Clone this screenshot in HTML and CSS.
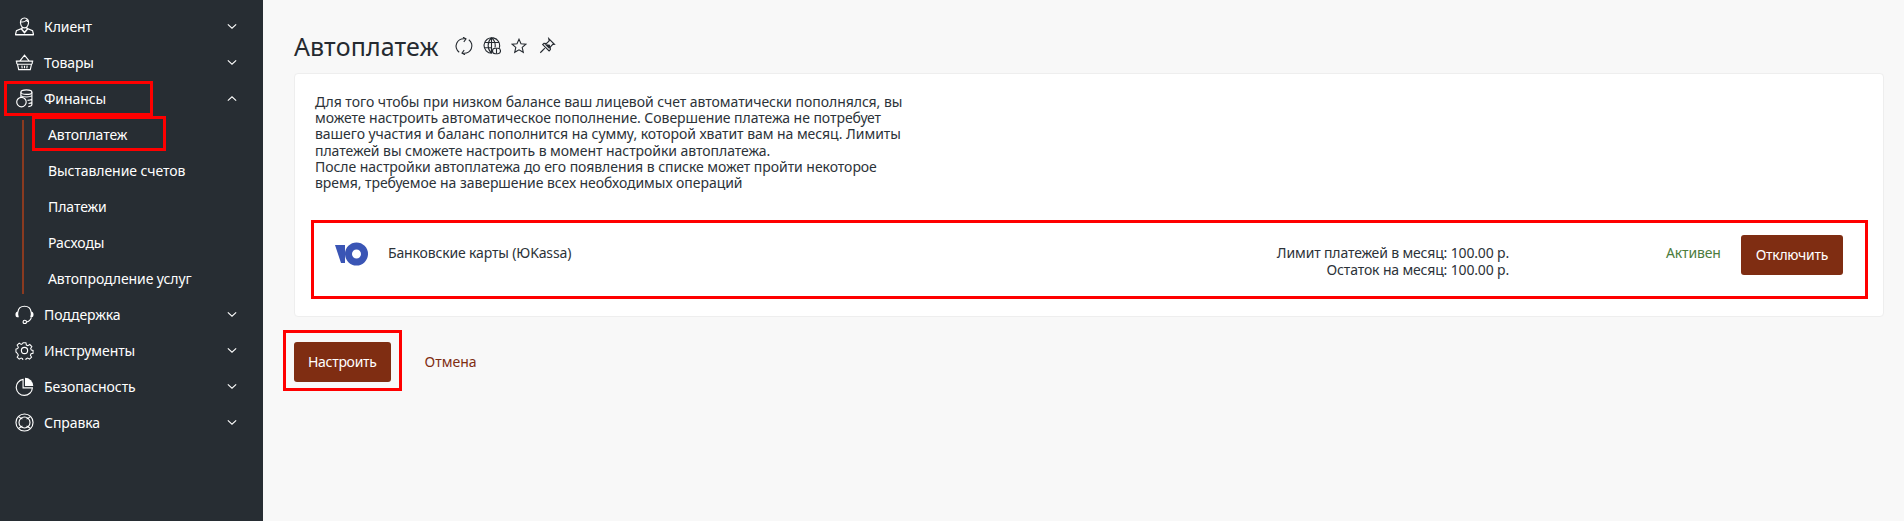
FILE: index.html
```html
<!DOCTYPE html>
<html>
<head>
<meta charset="utf-8">
<title>Автоплатеж</title>
<link rel="stylesheet" href="styles.css">
</head>
<body>
<div class="layout">
    <aside class="sidebar">
        <a class="nav-item">
            <svg class="nav-icon" viewBox="0 0 20 20"><path d="M5.800 6.500C5.400 3.200 7.400 1 10 1s4.600 2.200 4.200 5.500c-.3 2.700-2.200 5-4.200 5s-3.900-2.300-4.200-5zM5.900 5c2.300.6 5-.3 6-1.600.6.900 1.400 1.400 2.200 1.500M7.500 10.500v1.500L1.500 14.500.5 18.500h19l-1-4-6-2.500v-1.500M.5 19h19"/><path class="solid" d="M7.500 12.300l2.500 2.700 2.500-2.700 1.500.7-4 4.500-4-4.500z"/></svg>
            <span class="nav-label">Клиент</span>
            <svg class="chevron" viewBox="0 0 12 8"><path d="M1 1.500l5 4.500 5-4.500"/></svg>
        </a>
        <a class="nav-item">
            <svg class="nav-icon" viewBox="0 0 20 20"><path d="M.8 8.500h18.400M1.800 8.500v2c0 .7.300 1.100.8 1.300l1.300 5.700h12.200l1.300-5.700c.5-.2.800-.6.800-1.300v-2M2.600 11.800h14.800M5 8.500L10 2.300l5 6.200M7.200 13.300l.4 2.800M10 13.300v2.800M12.800 13.300l-.4 2.800"/></svg>
            <span class="nav-label">Товары</span>
            <svg class="chevron" viewBox="0 0 12 8"><path d="M1 1.500l5 4.500 5-4.500"/></svg>
        </a>
        <a class="nav-item">
            <svg class="nav-icon" viewBox="0 0 20 20"><ellipse cx="12" cy="3.300" rx="5.800" ry="2.400"/><path d="M6.200 3.300v5.200M17.800 3.300v13c0 1.100-1.600 1.900-3.800 2.200M6.200 7c1 .9 3.300 1.400 5.800 1.400s4.800-.5 5.800-1.400M13.200 11.900c2.200 0 3.800-.5 4.600-1.300M14.200 15.300c1.700-.1 3-.5 3.600-1.100"/><circle cx="6.800" cy="13.800" r="5"/></svg>
            <span class="nav-label">Финансы</span>
            <svg class="chevron" viewBox="0 0 12 8"><path d="M1 6.500l5-4.500 5 4.500"/></svg>
            <span class="mark mark-finance"></span>
        </a>
        <div class="subnav">
            <a class="sub-item">Автоплатеж<span class="mark mark-autopay"></span></a>
            <a class="sub-item">Выставление счетов</a>
            <a class="sub-item">Платежи</a>
            <a class="sub-item">Расходы</a>
            <a class="sub-item">Автопродление услуг</a>
        </div>
        <a class="nav-item">
            <svg class="nav-icon" viewBox="0 0 20 20"><path d="M3 7.500C3.500 3.700 6.400 1.300 10 1.300s6.500 2.400 7 6.200M17.300 13c-.7 2.600-2.500 4.300-5.300 4.900"/><path class="solid" d="M3.500 7H2.300C1.100 7 .5 8.500.5 10s.6 3 1.800 3H4c-.6-2-.8-4-.5-6zM16.500 7h1.200c1.200 0 1.800 1.500 1.800 3s-.6 3-1.800 3H16c.6-2 .8-4 .5-6z"/><circle cx="10.300" cy="17.800" r="1.800"/></svg>
            <span class="nav-label">Поддержка</span>
            <svg class="chevron" viewBox="0 0 12 8"><path d="M1 1.500l5 4.500 5-4.500"/></svg>
        </a>
        <a class="nav-item">
            <svg class="nav-icon" viewBox="0 0 20 20"><circle cx="10" cy="10" r="3.300"/><path d="M8.300 1h3.400l.5 2.600 1.700.8 2.300-1.400 2.400 2.400-1.400 2.300.8 1.700 2 .5v3.400l-2.400.5-.7 1.700 1.400 2.300-2.400 2.300-2.200-1.300-1.800.7-.5 2.500H8.300l-.6-2.500-1.700-.7-2.200 1.300-2.400-2.300 1.400-2.300-.8-1.700L0 11.700V8.300l2-.5.800-1.700L1.400 3.800 3.800 1.400l2.300 1.400 1.700-.8z" transform="translate(1 1) scale(.9)"/></svg>
            <span class="nav-label">Инструменты</span>
            <svg class="chevron" viewBox="0 0 12 8"><path d="M1 1.500l5 4.500 5-4.500"/></svg>
        </a>
        <a class="nav-item">
            <svg class="nav-icon" viewBox="0 0 20 20"><path d="M8.500 2.500A8.500 8.500 0 1 0 18.300 11.500H8.500z"/><path class="solid" d="M10.500.8a8.700 8.700 0 0 1 8.700 8.700H10.500z"/></svg>
            <span class="nav-label">Безопасность</span>
            <svg class="chevron" viewBox="0 0 12 8"><path d="M1 1.500l5 4.500 5-4.500"/></svg>
        </a>
        <a class="nav-item">
            <svg class="nav-icon" viewBox="0 0 20 20"><circle cx="10" cy="10" r="9"/><circle cx="10" cy="10" r="5.800"/><path d="M3.800 3.800c1.400 1.200 2.800 2 4 2.600M16.200 3.800c-1.400 1.200-2.800 2-4 2.600M3.800 16.200c1.400-1.200 2.800-2 4-2.600M16.200 16.200c-1.400-1.200-2.800-2-4-2.600"/></svg>
            <span class="nav-label">Справка</span>
            <svg class="chevron" viewBox="0 0 12 8"><path d="M1 1.500l5 4.500 5-4.500"/></svg>
        </a>
    </aside>
    <main class="content">
        <div class="page-head">
            <h1>Автоплатеж</h1>
            <div class="head-icons">
                <svg class="head-icon" viewBox="0 0 18 18"><path d="M4.200 15.300C1.300 13.200.3 9.300 1.700 6.200 3 3.300 6.200 1.300 10.500 1.800M13.800 2.700c2.900 2.100 3.900 6 2.500 9.100-1.300 2.900-4.500 4.900-8.800 4.400"/><path d="M8 .2l3 1.800-2.200 2.800M10 17.800l-3-1.800 2.200-2.800"/></svg>
                <svg class="head-icon" viewBox="0 0 18 18"><path d="M9 16.300a7.800 7.800 0 1 1 7.300-5.500M8.500.7c-4.500 4.500-4.500 11 0 15.600M8.500.7c3.300 3 4.200 6.600 3.500 9.800M8.500.7v15M1.300 5.500h14.400M1 10.800h8"/><rect class="badge" x="9.500" y="11.300" width="8" height="5.400" rx="2.700"/><path d="M13.500 11.500v5"/></svg>
                <svg class="head-icon head-star" viewBox="0 0 16 16"><path d="M8 1.200l2 4.500 4.900.5-3.700 3.200 1.100 4.900L8 11.800l-4.300 2.500 1.100-4.900L1.100 6.200 6 5.700z"/></svg>
                <svg class="head-icon head-pin" viewBox="0 0 16 16"><path class="solid" d="M5 6.500l4.500 4.500 1-1.200-.2-2.500L5 6.500z"/><path d="M9.200 1.500l5.300 5.300-1.500.1-2.500 2.600.2 2.400-1.200 1.200-6-6 1.200-1.200 2.400.2 2.500-2.500z"/><path d="M5.500 10.500L1.200 14.800"/></svg>
            </div>
        </div>
        <section class="card">
            <p class="intro">Для того чтобы при низком балансе ваш лицевой счет автоматически пополнялся, вы<br>
            можете настроить автоматическое пополнение. Совершение платежа не потребует<br>
            вашего участия и баланс пополнится на сумму, которой хватит вам на месяц. Лимиты<br>
            платежей вы сможете настроить в момент настройки автоплатежа.<br>
            После настройки автоплатежа до его появления в списке может пройти некоторое<br>
            время, требуемое на завершение всех необходимых операций</p>
            <div class="pay-row">
                <svg class="pay-logo" viewBox="0 0 33 24"><path class="logo-v" d="M0 3h10v18H6z"/><path class="logo-o" fill-rule="evenodd" d="M21.500.5a11.500 11.500 0 1 1-11.500 11.500A11.500 11.500 0 0 1 21.500.5zm0 7a4.500 4.500 0 1 0 4.500 4.500 4.500 4.500 0 0 0-4.500-4.500z"/></svg>
                <div class="pay-name">Банковские карты (ЮKassa)</div>
                <div class="pay-limits">Лимит платежей в месяц: 100.00 р.<br>Остаток на месяц: 100.00 р.</div>
                <div class="pay-status">Активен</div>
                <button class="btn btn-off">Отключить</button>
            </div>
        </section>
        <div class="actions">
            <button class="btn">Настроить<span class="mark mark-setup"></span></button>
            <a class="cancel">Отмена</a>
        </div>
    </main>
</div>
</body>
</html>
```

FILE: styles.css
```css
* {
    box-sizing: border-box;
}
html, body {
    height: 100%;
}
body {
    margin: 0;
    font-family: 'Noto Sans', sans-serif;
    font-size: 14px;
    color: #2c3238;
    background: #f8f8f8;
    overflow: hidden;
}
.layout {
    display: flex;
    height: 521px;
}
.sidebar {
    flex: 0 0 263px;
    padding-top: 8px;
    background: #272d33;
    color: #fff;
    letter-spacing: -.08px;
}
.nav-item {
    position: relative;
    display: flex;
    align-items: center;
    height: 36px;
    padding-left: 15px;
}
.nav-icon {
    flex: 0 0 19px;
    width: 19px;
    height: 19px;
    fill: none;
    stroke: #fff;
    stroke-width: 1.2;
}
.nav-icon .solid {
    fill: #fff;
    stroke: none;
}
.nav-label {
    margin-left: 10px;
}
.chevron {
    position: absolute;
    left: 227px;
    width: 10px;
    height: 7px;
    fill: none;
    stroke: #fff;
    stroke-width: 1.3;
}
.subnav {
    position: relative;
}
.subnav::before {
    content: "";
    position: absolute;
    left: 22px;
    top: 4px;
    bottom: 2px;
    width: 2px;
    background: #8a3a20;
}
.sub-item {
    position: relative;
    display: flex;
    align-items: center;
    height: 36px;
    padding-left: 48px;
}
.mark {
    position: absolute;
    border: 3px solid #f00;
    pointer-events: none;
}
.mark-finance {
    left: 4px;
    top: 1px;
    width: 149px;
    height: 35px;
}
.mark-autopay {
    left: 32px;
    top: 0;
    width: 134px;
    height: 35px;
}
.content {
    flex: 1;
    padding: 0 20px 0 31px;
    min-width: 0;
}
.page-head {
    display: flex;
    align-items: center;
    height: 73px;
    padding-top: 18px;
}
h1 {
    margin: 0;
    font-size: 25px;
    font-weight: 400;
    letter-spacing: .15px;
    color: #252a30;
}
.head-icons {
    display: flex;
    align-items: center;
    gap: 10px;
    margin-left: 16px;
}
.head-icon {
    width: 18px;
    height: 18px;
    fill: none;
    stroke: #252a30;
    stroke-width: 1.1;
}
.head-icon .solid {
    fill: #252a30;
    stroke: none;
}
.head-icon .badge {
    fill: #f8f8f8;
}
.head-star {
    width: 16px;
    height: 16px;
}
.head-pin {
    width: 17px;
    height: 17px;
    margin-left: 2px;
}
.card {
    padding: 20px 15px 17px 16px;
    border: 1px solid #eee;
    border-radius: 4px;
    background: #fff;
}
.intro {
    margin: 0 0 29px 4px;
    line-height: 16.2px;
    letter-spacing: -.05px;
}
.pay-row {
    display: flex;
    align-items: flex-start;
    height: 79px;
    padding: 12px 22px 0 21px;
    border: 3px solid #f00;
    letter-spacing: -.15px;
}
.pay-logo {
    flex: 0 0 33px;
    width: 33px;
    height: 24px;
    margin-top: 7px;
}
.logo-v, .logo-o {
    fill: #3a55b5;
}
.pay-name {
    margin-left: 20px;
    margin-top: 8px;
}
.pay-limits {
    margin-left: auto;
    margin-top: 9px;
    line-height: 17px;
    text-align: right;
}
.pay-status {
    margin-left: 157px;
    margin-top: 8px;
    color: #4c7c3c;
}
.btn {
    position: relative;
    height: 40px;
    padding: 0 14px 2px;
    margin-left: 20px;
    border: 0;
    border-radius: 3px;
    font: inherit;
    letter-spacing: -.3px;
    color: #fff;
    background: #7f2d12;
}
.btn-off {
    padding: 0 15px 2px;
}
.actions {
    display: flex;
    align-items: center;
    margin-top: 25px;
}
.actions .btn {
    margin-left: 0;
}
.mark-setup {
    left: -11px;
    top: -12px;
    width: 119px;
    height: 61px;
}
.cancel {
    margin-left: 34px;
    margin-bottom: 2px;
    color: #7f2d12;
}
```
